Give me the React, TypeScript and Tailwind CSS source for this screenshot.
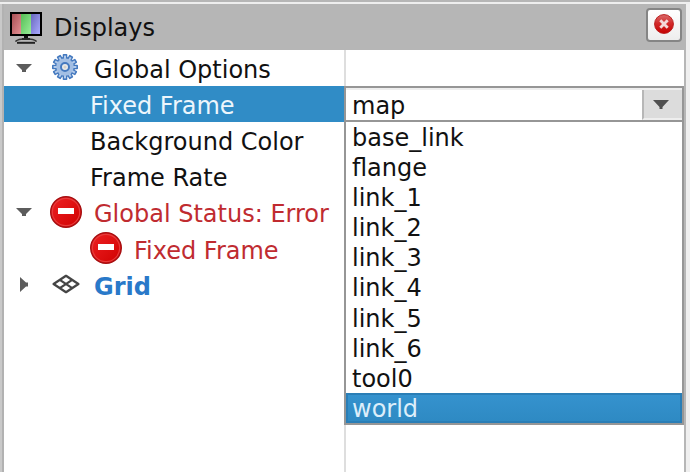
import React from 'react';

const options = ['base_link', 'flange', 'link_1', 'link_2', 'link_3', 'link_4', 'link_5', 'link_6', 'tool0', 'world'];

function MonitorIcon() {
  return (
    <svg width="32" height="32" viewBox="0 0 32 32" className="block shrink-0">
      <rect width="32" height="24" fill="#000" />
      <defs>
        <linearGradient id="mr" x2="1" y2="1"><stop stopColor="#a85054" /><stop offset="1" stopColor="#e49094" /></linearGradient>
        <linearGradient id="mg" x2="1" y2="1"><stop stopColor="#56bd56" /><stop offset="1" stopColor="#98ee98" /></linearGradient>
        <linearGradient id="mb" x2="1" y2="1"><stop stopColor="#6868bd" /><stop offset="1" stopColor="#aaaaff" /></linearGradient>
      </defs>
      <rect x="2" y="2" width="9" height="20" fill="url(#mr)" />
      <rect x="11" y="2" width="10" height="20" fill="url(#mg)" />
      <rect x="21" y="2" width="9" height="20" fill="url(#mb)" />
      <path d="M14 24h4v2h2v2h-8v-2h2z" fill="#111" />
      <path d="M7 28h18l1 2H6z" fill="#b8b8b8" />
      <path d="M6 30V28.8q3-1.8 7-1.8h6q4 0 7 1.8V30" fill="none" stroke="#333" strokeWidth="1.3" />
      <path d="M7 30.8h18" stroke="#222" strokeWidth="2" />
    </svg>
  );
}

const teeth = Array.from({ length: 12 }, (_, i) => i * 30);

function GearIcon() {
  return (
    <svg width="26" height="26" viewBox="-13 -13 26 26" className="block">
      <g fill="#4479bf">
        {teeth.map((a) => (
          <rect key={a} x="-2.3" y="-13" width="4.6" height="6" rx="0.8" transform={`rotate(${a})`} />
        ))}
        <circle r="10.2" />
      </g>
      <g fill="#b4cbea">
        {teeth.map((a) => (
          <rect key={a} x="-1" y="-11.4" width="2" height="5" transform={`rotate(${a})`} />
        ))}
        <circle r="8.7" fill="#a3bfe4" />
      </g>
      <circle r="4" fill="#e8eaec" stroke="#4479bf" strokeWidth="2" />
      <circle r="1.5" fill="#d6d2c8" />
    </svg>
  );
}

function ErrorIcon() {
  return (
    <svg width="32" height="32" viewBox="0 0 32 32" className="block">
      <defs><linearGradient id="er" x2="1" y2="1"><stop stopColor="#ee2224" /><stop offset="1" stopColor="#cf0000" /></linearGradient></defs>
      <circle cx="16" cy="16" r="15.3" fill="url(#er)" stroke="#a60e10" strokeWidth="1.4" />
      <circle cx="16" cy="16" r="13.7" fill="none" stroke="#e63c3c" strokeWidth="1.2" />
      <rect x="8" y="12" width="16" height="6" fill="#fff" />
    </svg>
  );
}

function GridIcon() {
  return (
    <svg width="28" height="20" viewBox="0 0 28 20" className="block" fill="none" stroke="#454545" strokeWidth="2.3" strokeLinejoin="round">
      <path d="M14 1.8L26.4 10L14 18.2L1.600 10zM7.8 5.9L20.2 14.1M20.2 5.9L7.8 14.1" />
    </svg>
  );
}

function Arrow({ open }: { open: boolean }) {
  return (
    <svg width="16" height="16" viewBox="0 0 16 16" className="block" fill="#5c5c5c">
      {open ? <path d="M0 4h16l-6 6v2H6v-2z" /> : <path d="M4 1v15l6-5.5h2v-4h-2z" />}
    </svg>
  );
}

type RowProps = { label: string; icon?: React.ReactNode; open?: boolean; pad: string; tone?: string; lead?: string };

function Row({ label, icon, open, pad, tone = '', lead = 'leading-[36px]' }: RowProps) {
  return (
    <div className={`flex h-9 shrink-0 items-center ${tone}`}>
      <div className="flex w-9 shrink-0 justify-center pr-px pl-1">{open !== undefined && <Arrow open={open} />}</div>
      <div className={`flex shrink-0 items-center ${pad}`}>{icon}</div>
      <span className={`h-9 pt-0.5 whitespace-pre ${lead}`}>{label}</span>
    </div>
  );
}

export default function App() {
  return (
    <div className="relative flex h-[472px] w-[690px] flex-col overflow-hidden bg-[#b6b6b6] text-[24px] text-[#111]" style={{ fontFamily: '"DejaVu Sans", sans-serif' }}>
      <div className="h-1 shrink-0 border-b-2 border-[#eeeeee] bg-[#b6b6b6]" />
      <div className="flex min-h-0 flex-1">
        <div className="w-0.5 shrink-0 bg-[#c9c9c9]" />
        <div className="w-0.5 shrink-0 bg-[#b2b2b2]" />
        <main className="flex w-[680px] shrink-0 flex-col">
          <header className="flex h-[46px] shrink-0 items-center bg-[#b6b6b6] pl-1.5">
            <div className="pt-0.5"><MonitorIcon /></div>
            <h1 className="ml-3 pt-0.5 leading-[44px]">Displays</h1>
            <button className="mr-0.5 mb-1 ml-auto flex h-[34px] w-9 items-center justify-center rounded border-2 border-[#858585] bg-linear-to-b from-white to-[#ededed]">
              <svg width="20" height="20" viewBox="0 0 21 21" className="mb-0.5">
                <defs><linearGradient id="close" x2="0" y2="1"><stop stopColor="#d96b6b" /><stop offset=".45" stopColor="#d32c2c" /><stop offset="1" stopColor="#c50000" /></linearGradient></defs>
                <circle cx="10.5" cy="10.5" r="9.9" fill="url(#close)" stroke="#b91c1c" />
                <path d="M6.6 6.6l7.8 7.8M14.4 6.6l-7.8 7.8" stroke="#f4dada" strokeWidth="3" />
              </svg>
            </button>
          </header>
          <div className="flex min-h-0 flex-1 bg-white">
            <section className="flex w-[340px] shrink-0 flex-col">
              <Row label="Global Options" icon={<GearIcon />} open pad="w-[54px] pl-[12px] pb-0.5" />
              <Row label="Fixed Frame" pad="w-[50px]" tone="bg-[#308cc6] text-[#edf6fc]" />
              <Row label="Background Color" pad="w-[50px]" />
              <Row label="Frame Rate" pad="w-[50px]" />
              <Row label="Global Status: Error" icon={<ErrorIcon />} open pad="w-[54px] pl-2.5" tone="text-[#c02b30]" />
              <Row label="Fixed Frame" icon={<ErrorIcon />} pad="w-[94px] pl-[50px]" tone="text-[#c02b30]" lead="leading-[38px]" />
              <Row label="Grid" icon={<GridIcon />} open={false} pad="w-[54px] pl-3" tone="font-bold text-[#2979c9]" lead="leading-[38px]" />
            </section>
            <section className="flex flex-1 flex-col border-l-2 border-[#dedede]">
              <div className="h-9" />
            </section>
          </div>
        </main>
        <div className="w-0.5 shrink-0 bg-[#b6b6b6]" />
        <div className="w-1 shrink-0 bg-[#efefef]" />
      </div>
      <div className="absolute top-[86px] left-[344px] flex w-[340px] flex-col border-2 border-[#969696] bg-white">
        <div className="flex h-8 border-t-2 border-[#eeeeee]">
          <span className="flex-1 pl-1.5 leading-[32px]">map</span>
          <div className="flex w-10 items-center justify-center border-b-2 border-l-2 border-b-[#eeeeee] border-l-[#b7b7b7] bg-[#dcdcdc] pr-1">
            <svg width="16" height="9" viewBox="0 0 16 9"><path d="M0 0h16L9.500 7V9h-3V7z" fill="#505050" /></svg>
          </div>
        </div>
        <div className="h-0.5 bg-[#969696]" />
        <ul className="flex flex-col">
          {options.map((name) => (
            <li key={name} className={`h-[30.1px] ${name === 'world' ? 'border-2 border-[#2a7eb6] bg-linear-to-b from-[#3592ce] to-[#2e8ac3] pl-1 leading-[28px] text-[#dceefa]' : 'pl-1.5 leading-[32px]'}`}>{name}</li>
          ))}
        </ul>
      </div>
    </div>
  );
}
